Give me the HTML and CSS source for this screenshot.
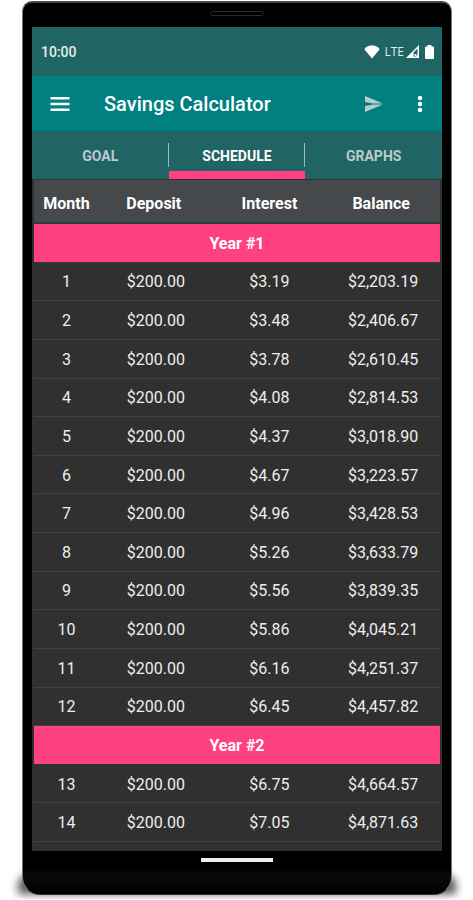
FILE: index.html
```html
<!DOCTYPE html>
<html lang="en">
<head>
<meta charset="utf-8">
<meta name="viewport" content="width=device-width, initial-scale=1">
<title>Savings Calculator</title>
<link rel="stylesheet" href="styles.css">
</head>
<body>
<div class="phone">
  <div class="speaker"></div>
  <main class="screen">
    <div class="status">
      <time>10:00</time>
      <div class="signals">
        <svg class="wifi" viewBox="0 0 16 14" aria-hidden="true"><path d="M8 13.500 0.500 4.500C1 2.500 4 .500 8 .500s7 2 7.500 4Z"/></svg>
        <span class="lte">LTE</span>
        <svg class="cell" viewBox="0 0 13 13" aria-hidden="true"><path d="M13 0v13H0Z"/><path class="cell-mark" d="M7.500 7.500 11.500 3.500v6h-1v2h-3Z"/><path d="M8.500 9h1.500v2H8.500Z"/></svg>
        <svg class="battery" viewBox="0 0 9 14" aria-hidden="true"><path d="M2.500 0h4v1.500H8q1 0 1 1V13q0 1-1 1H1q-1 0-1-1V2.500q0-1 1-1h1.500Z"/></svg>
      </div>
    </div>
    <header class="appbar">
      <button class="icon-button" aria-label="Menu"><svg class="menu" viewBox="0 0 20 14"><path d="M.5 0h19v2.500H.5ZM.5 5.750h19v2.500H.5ZM.5 11.500h19V14H.5Z"/></svg></button>
      <h1>Savings Calculator</h1>
      <button class="icon-button" aria-label="Send"><svg class="send" viewBox="0 0 20 18"><path class="send-shade" d="M.5 0 20 9 .5 18Z"/><path class="send-shape" d="M1 1 19 8.500H9L1 7ZM1 17 19 9.500H9L1 11Z"/></svg></button>
      <button class="icon-button more" aria-label="More options"><svg class="dots" viewBox="0 0 6 18"><circle cx="3" cy="3" r="2.300"/><circle cx="3" cy="9" r="2.300"/><circle cx="3" cy="15" r="2.300"/></svg></button>
    </header>
    <nav class="tabs">
      <button>GOAL</button>
      <button class="active" aria-current="page">SCHEDULE</button>
      <button>GRAPHS</button>
    </nav>
    <div class="schedule">
      <table>
        <colgroup><col class="month"><col class="deposit"><col class="interest"><col class="balance"></colgroup>
        <thead><tr><th>Month</th><th>Deposit</th><th>Interest</th><th>Balance</th></tr></thead>
        <tbody>
          <tr class="year"><th colspan="4">Year #1</th></tr>
          <tr><td>1</td><td>$200.00</td><td>$3.19</td><td>$2,203.19</td></tr>
          <tr><td>2</td><td>$200.00</td><td>$3.48</td><td>$2,406.67</td></tr>
          <tr><td>3</td><td>$200.00</td><td>$3.78</td><td>$2,610.45</td></tr>
          <tr><td>4</td><td>$200.00</td><td>$4.08</td><td>$2,814.53</td></tr>
          <tr><td>5</td><td>$200.00</td><td>$4.37</td><td>$3,018.90</td></tr>
          <tr><td>6</td><td>$200.00</td><td>$4.67</td><td>$3,223.57</td></tr>
          <tr><td>7</td><td>$200.00</td><td>$4.96</td><td>$3,428.53</td></tr>
          <tr><td>8</td><td>$200.00</td><td>$5.26</td><td>$3,633.79</td></tr>
          <tr><td>9</td><td>$200.00</td><td>$5.56</td><td>$3,839.35</td></tr>
          <tr><td>10</td><td>$200.00</td><td>$5.86</td><td>$4,045.21</td></tr>
          <tr><td>11</td><td>$200.00</td><td>$6.16</td><td>$4,251.37</td></tr>
          <tr><td>12</td><td>$200.00</td><td>$6.45</td><td>$4,457.82</td></tr>
          <tr class="year"><th colspan="4">Year #2</th></tr>
          <tr><td>13</td><td>$200.00</td><td>$6.75</td><td>$4,664.57</td></tr>
          <tr><td>14</td><td>$200.00</td><td>$7.05</td><td>$4,871.63</td></tr>
        </tbody>
      </table>
    </div>
  </main>
  <div class="home"></div>
</div>
</body>
</html>
```
FILE: styles.css
```css
* { box-sizing: border-box; }

body {
  margin: 0;
  padding: 1px 21px 4px 22px;
  background: #fff;
  color: #fff;
  font-family: Roboto, "Liberation Sans", sans-serif;
}

.phone {
  position: relative;
  display: flow-root;
  padding: 0 9px;
  background: linear-gradient(#000 97%, #0a0a0a 98%, #000);
  border: 1px solid #777;
  border-top: 2px solid #4b4b4b;
  border-bottom: 1px solid #333;
  border-radius: 10px 10px 18px 18px;
}

/* Soft floor shadow at the foot of the device */
.phone::before {
  content: "";
  position: absolute;
  z-index: -1;
  left: -5px;
  right: -5px;
  bottom: 0;
  height: 20px;
  border-radius: 12px 12px 0 0;
  background: #555;
  filter: blur(4px);
}

.speaker {
  width: 54px;
  height: 5px;
  margin: 8px auto 11px;
  border: 1px solid #292929;
  border-radius: 3px;
}

.screen { background: #303030; }

.status {
  display: flex;
  align-items: center;
  justify-content: space-between;
  height: 49px;
  padding: 0 8px 0 9px;
  background: #206464;
  font-size: 14px;
  font-weight: 500;
  color: #e4eded;
}

.signals { display: flex; align-items: center; }
.lte {
  margin: 0 2px 0 4px;
  font-family: "Open Sans", Roboto, sans-serif;
  font-size: 12px;
  font-weight: 400;
}

svg { display: block; fill: #fff; }
.wifi { width: 16px; height: 14px; }
.cell { width: 13px; height: 13px; }
.cell-mark { fill: #206464; }
.battery { width: 9px; height: 14px; margin-left: 6px; }

.appbar {
  display: flex;
  align-items: center;
  height: 55px;
  padding: 0 7px 0 8px;
  background: #008080;
}

h1 {
  flex: 1;
  margin: 0 0 0 24px;
  font-size: 20px;
  font-weight: 500;
}

button {
  padding: 0;
  border: 0;
  background: none;
  color: inherit;
  font-family: inherit;
}

.icon-button {
  display: grid;
  place-items: center;
  width: 40px;
  height: 40px;
}
.more { width: 30px; margin-left: 11px; }

.menu { width: 20px; height: 14px; }
.send { width: 20px; height: 18px; }
.send-shape { fill: #a5d3d3; }
.send-shade { fill: #286b6b; }
.dots { width: 6px; height: 18px; }

.tabs {
  display: grid;
  grid-template-columns: repeat(3, 1fr);
  height: 48px;
  background: #206464;
}

.tabs button {
  position: relative;
  padding-top: 2px;
  font-size: 14px;
  font-weight: 700;
  color: #bccccc;
}

.tabs .active {
  padding-top: 10px;
  border-bottom: 8px solid #ff4081;
  color: #fff;
}

.tabs button + button::before {
  content: "";
  position: absolute;
  left: -1px;
  top: 12px;
  width: 1px;
  height: 24px;
  background: #9bb9b9;
}

.schedule {
  height: 672px;
  padding: 1px 2px 0;
  overflow: hidden;
}

table {
  width: 100%;
  height: 662px;
  table-layout: fixed;
  border-collapse: separate;
  border-spacing: 0;
  font-size: 16px;
}

.month { width: 16%; }
.deposit { width: 28%; }
.interest { width: 28%; }
.balance { width: 28%; }

th, td {
  height: 38px;
  padding: 0;
  text-align: center;
}

td {
  border-bottom: 1px solid #414141;
  color: #eee;
}

th { font-weight: 700; }

thead th {
  height: 44px;
  padding-top: 4px;
  border-bottom: 2px solid #263b3b;
  background: #45494c;
}

thead th:nth-child(even) { padding-right: 4px; }

.year th {
  padding-top: 2px;
  border-bottom: 1px solid #263b3b;
  background: #ff4081;
}

td { padding-top: 1px; }

.home {
  width: 72px;
  height: 4px;
  margin: 7px auto 32px;
  background: #eee;
}
```
